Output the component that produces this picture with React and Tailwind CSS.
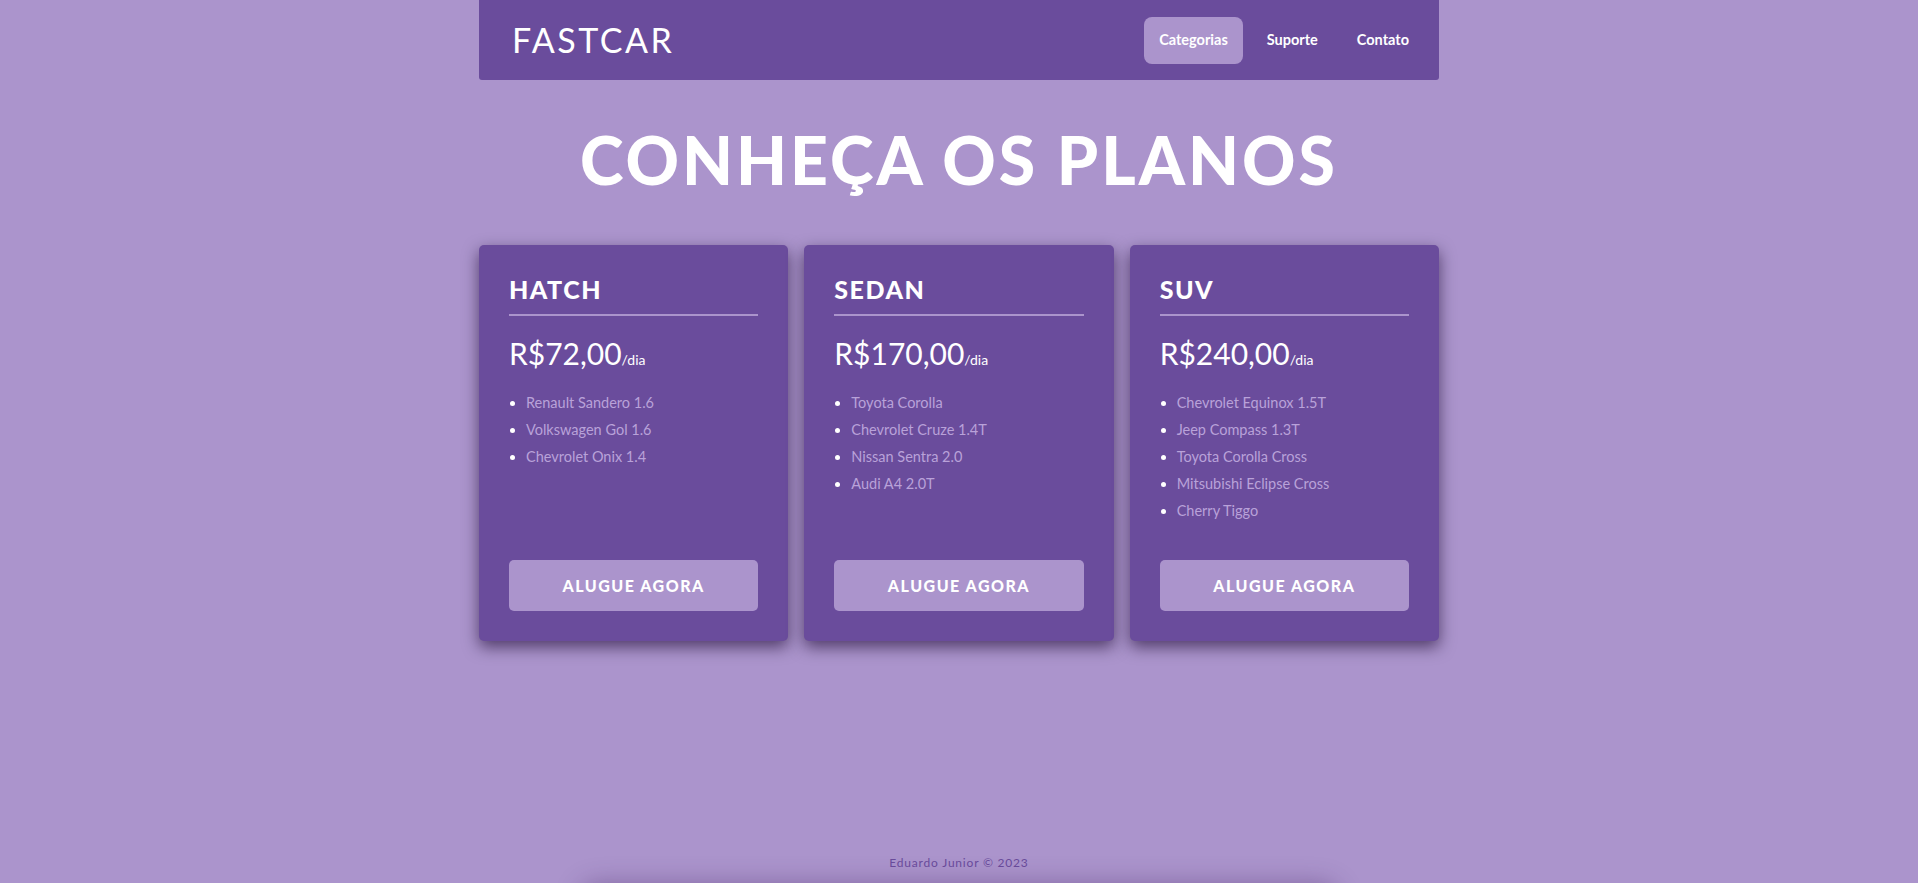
import React from "react";

const plans = [
  { name: "HATCH", price: "R$72,00", cars: ["Renault Sandero 1.6", "Volkswagen Gol 1.6", "Chevrolet Onix 1.4"] },
  { name: "SEDAN", price: "R$170,00", cars: ["Toyota Corolla", "Chevrolet Cruze 1.4T", "Nissan Sentra 2.0", "Audi A4 2.0T"] },
  { name: "SUV", price: "R$240,00", cars: ["Chevrolet Equinox 1.5T", "Jeep Compass 1.3T", "Toyota Corolla Cross", "Mitsubishi Eclipse Cross", "Cherry Tiggo"] },
];

export default function App() {
  return (
    <div className="relative min-h-screen overflow-hidden bg-[#ab94cc] flex flex-col items-center text-white font-['Lato','Open_Sans',sans-serif]">
      <header className="w-[960px] h-[80px] shrink-0 rounded-b-[3px] bg-[#6a4c9c] flex items-center justify-between pl-[33px] pr-[15px]">
        <div className="text-[34px] leading-none tracking-[2.5px]">FASTCAR</div>
        <nav className="flex items-center gap-[9px] text-[14.5px] font-bold">
          <a className="h-[47px] px-[15px] flex items-center rounded-[8px] bg-[#ab94cc]">Categorias</a>
          <a className="h-[47px] px-[15px] flex items-center">Suporte</a>
          <a className="h-[47px] px-[15px] flex items-center">Contato</a>
        </nav>
      </header>

      <h1 className="mt-[47px] text-[66px] leading-none font-black tracking-[3px]">CONHEÇA OS PLANOS</h1>

      <div className="mt-[52px] w-[960px] grid grid-cols-3 gap-[16px]">
        {plans.map((p) => (
          <div key={p.name} className="bg-[#6a4c9c] rounded-[5px] p-[30px] flex flex-col shadow-[0_6px_16px_rgba(20,0,40,0.6)]">
            <h2 className="text-[25px] leading-[29px] font-black tracking-[1.5px] pb-[10px] border-b-2 border-[#ab94cc]">{p.name}</h2>
            <div className="mt-[19px] leading-[36px]">
              <span className="text-[30px]">{p.price}</span>
              <span className="text-[14px]">/dia</span>
            </div>
            <ul className="mt-[11px] mb-[36px] flex-1 list-disc pl-[17px] text-[14.5px] leading-[27px] text-[#b9a2d9] marker:text-white">
              {p.cars.map((c) => (
                <li key={c}>{c}</li>
              ))}
            </ul>
            <button className="h-[51px] rounded-[5px] bg-[#ab94cc] text-white text-[16px] font-black tracking-[1.5px]">ALUGUE AGORA</button>
          </div>
        ))}
      </div>

      <footer className="relative mt-auto h-[40px] w-[760px] flex items-center justify-center">
        <span className="text-[12px] tracking-[0.8px] text-[#6a4c9c]">Eduardo Junior © 2023</span>
        <div className="absolute left-0 top-full w-[760px] h-[40px] rounded-[20px] shadow-[0_0_24px_rgba(60,30,90,0.35)]"></div>
      </footer>
    </div>
  );
}
